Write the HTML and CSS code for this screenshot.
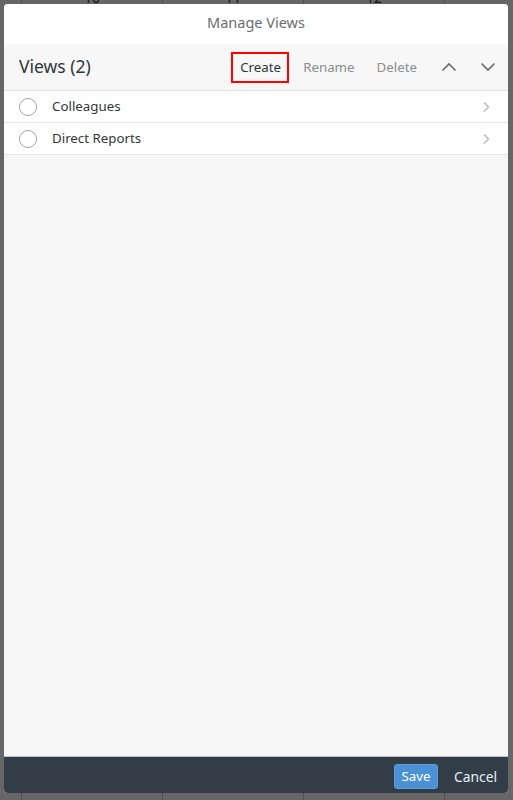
FILE: index.html
```html
<!DOCTYPE html>
<html lang="en">
<head>
    <meta charset="UTF-8">
    <meta name="viewport" content="width=device-width, initial-scale=1.0">
    <title>Manage Views</title>
    <link rel="stylesheet" href="styles.css">
</head>
<body>
    <!-- calendar behind the dialog -->
    <div class="calendar">
        <div class="calCol first"></div>
        <div class="calCol"><span>10</span></div>
        <div class="calCol"><span>11</span></div>
        <div class="calCol"><span>12</span></div>
        <div class="calCol last"></div>
    </div>
    <div class="overlay"></div>

    <div class="dialog">
        <div class="dialogHeader">Manage Views</div>

        <div class="toolbar">
            <div class="toolbarTitle">Views (2)</div>
            <div class="toolbarActions">
                <button class="btn btnCreate">Create</button>
                <button class="btn btnMuted btnRename">Rename</button>
                <button class="btn btnMuted">Delete</button>
                <button class="btn btnIcon">
                    <svg width="16" height="16" viewBox="0 0 16 16"><path d="M1.5 11.5 L8 5 L14.5 11.5" fill="none" stroke="#6a6d70" stroke-width="1.7"/></svg>
                </button>
                <button class="btn btnIcon">
                    <svg width="16" height="16" viewBox="0 0 16 16"><path d="M1.5 4.5 L8 11 L14.5 4.5" fill="none" stroke="#6a6d70" stroke-width="1.7"/></svg>
                </button>
            </div>
        </div>

        <div class="list">
            <div class="listItem">
                <span class="radio"></span>
                <span class="itemText">Colleagues</span>
                <svg class="chevron" width="8" height="12" viewBox="0 0 8 12"><path d="M2 1.5 L6.5 6 L2 10.5" fill="none" stroke="#b3b3b3" stroke-width="1.2"/></svg>
            </div>
            <div class="listItem">
                <span class="radio"></span>
                <span class="itemText">Direct Reports</span>
                <svg class="chevron" width="8" height="12" viewBox="0 0 8 12"><path d="M2 1.5 L6.5 6 L2 10.5" fill="none" stroke="#b3b3b3" stroke-width="1.2"/></svg>
            </div>
        </div>

        <div class="dialogFooter">
            <button class="btnSave">Save</button>
            <button class="btnCancel">Cancel</button>
        </div>
    </div>
</body>
</html>
```

FILE: styles.css
```css
html, body {
    margin: 0;
    padding: 0;
    height: 100%;
}
body {
    font-family: "Noto Sans", "Open Sans", sans-serif;
    background-color: #fff;
    overflow: hidden;
}

.calendar {
    display: flex;
    height: 800px;
}
.calCol {
    width: 140px;
    border-right: 1px solid #c8c8c8;
    text-align: center;
    font-size: 14px;
    color: #333;
}
.calCol span {
    display: block;
    margin-top: -12px;
}
.calCol.first {
    width: 21px;
}
.calCol.last {
    border-right: none;
    flex: 1;
}

.overlay {
    position: fixed;
    inset: 0;
    background-color: rgba(0, 0, 0, 0.6);
}

.dialog {
    position: fixed;
    left: 4px;
    top: 4px;
    width: 504px;
    height: 789px;
    background-color: #f7f7f7;
    border-radius: 4px;
    overflow: hidden;
    display: flex;
    flex-direction: column;
}

.dialogHeader {
    height: 40px;
    line-height: 36px;
    background-color: #fff;
    text-align: center;
    font-size: 14.5px;
    color: #6a6d70;
}

.toolbar {
    height: 46px;
    display: flex;
    align-items: center;
    justify-content: space-between;
    padding: 0 1px 0 15px;
    border-bottom: 1px solid #e0e0e0;
    background-color: #f7f7f7;
}
.toolbarTitle {
    font-size: 17.5px;
    color: #32363a;
    margin-top: -2px;
}
.toolbarActions {
    display: flex;
    align-items: center;
}
.btn {
    font-family: inherit;
    font-size: 13.3px;
    background: none;
    border: none;
    height: 32px;
    padding: 0 10px;
    color: #6a6d70;
    cursor: pointer;
}
.btnCreate {
    color: #32363a;
    border: 2px solid #f00;
    padding: 0 7px;
    height: 31px;
    width: 58px;
    margin-right: 2px;
}
.btnMuted {
    color: #8b8d8f;
    padding: 0 12px;
}
.btnRename {
    padding-right: 10px;
}
.btnIcon {
    width: 39px;
    padding: 0;
    display: flex;
    align-items: center;
    justify-content: center;
}

.list {
    flex: 1;
}
.listItem {
    height: 31px;
    background-color: #fff;
    border-bottom: 1px solid #e5e5e5;
    display: flex;
    align-items: center;
    padding: 0 18px 0 15px;
}
.radio {
    width: 16px;
    height: 16px;
    border: 1px solid #a3a3a3;
    border-radius: 50%;
    background-color: #fff;
}
.itemText {
    flex: 1;
    margin-left: 15px;
    font-size: 13.3px;
    color: #32363a;
    margin-top: -1px;
}

.dialogFooter {
    height: 36px;
    background-color: #323d48;
    display: flex;
    align-items: center;
    justify-content: flex-end;
    gap: 16px;
    padding: 0 11px 0 8px;
    border-top: 1px solid #b8c0c8;
}
.btnSave {
    font-family: inherit;
    font-size: 13.3px;
    height: 25px;
    width: 44px;
    padding: 0;
    border: 1px solid #5c9fdd;
    border-radius: 3px;
    background-color: #4b91d6;
    color: #fff;
    margin-top: 2px;
}
.btnCancel {
    font-family: inherit;
    font-size: 13.8px;
    height: 25px;
    padding: 0;
    border: none;
    background: none;
    color: #e8eef3;
    margin-top: 2px;
}
```
